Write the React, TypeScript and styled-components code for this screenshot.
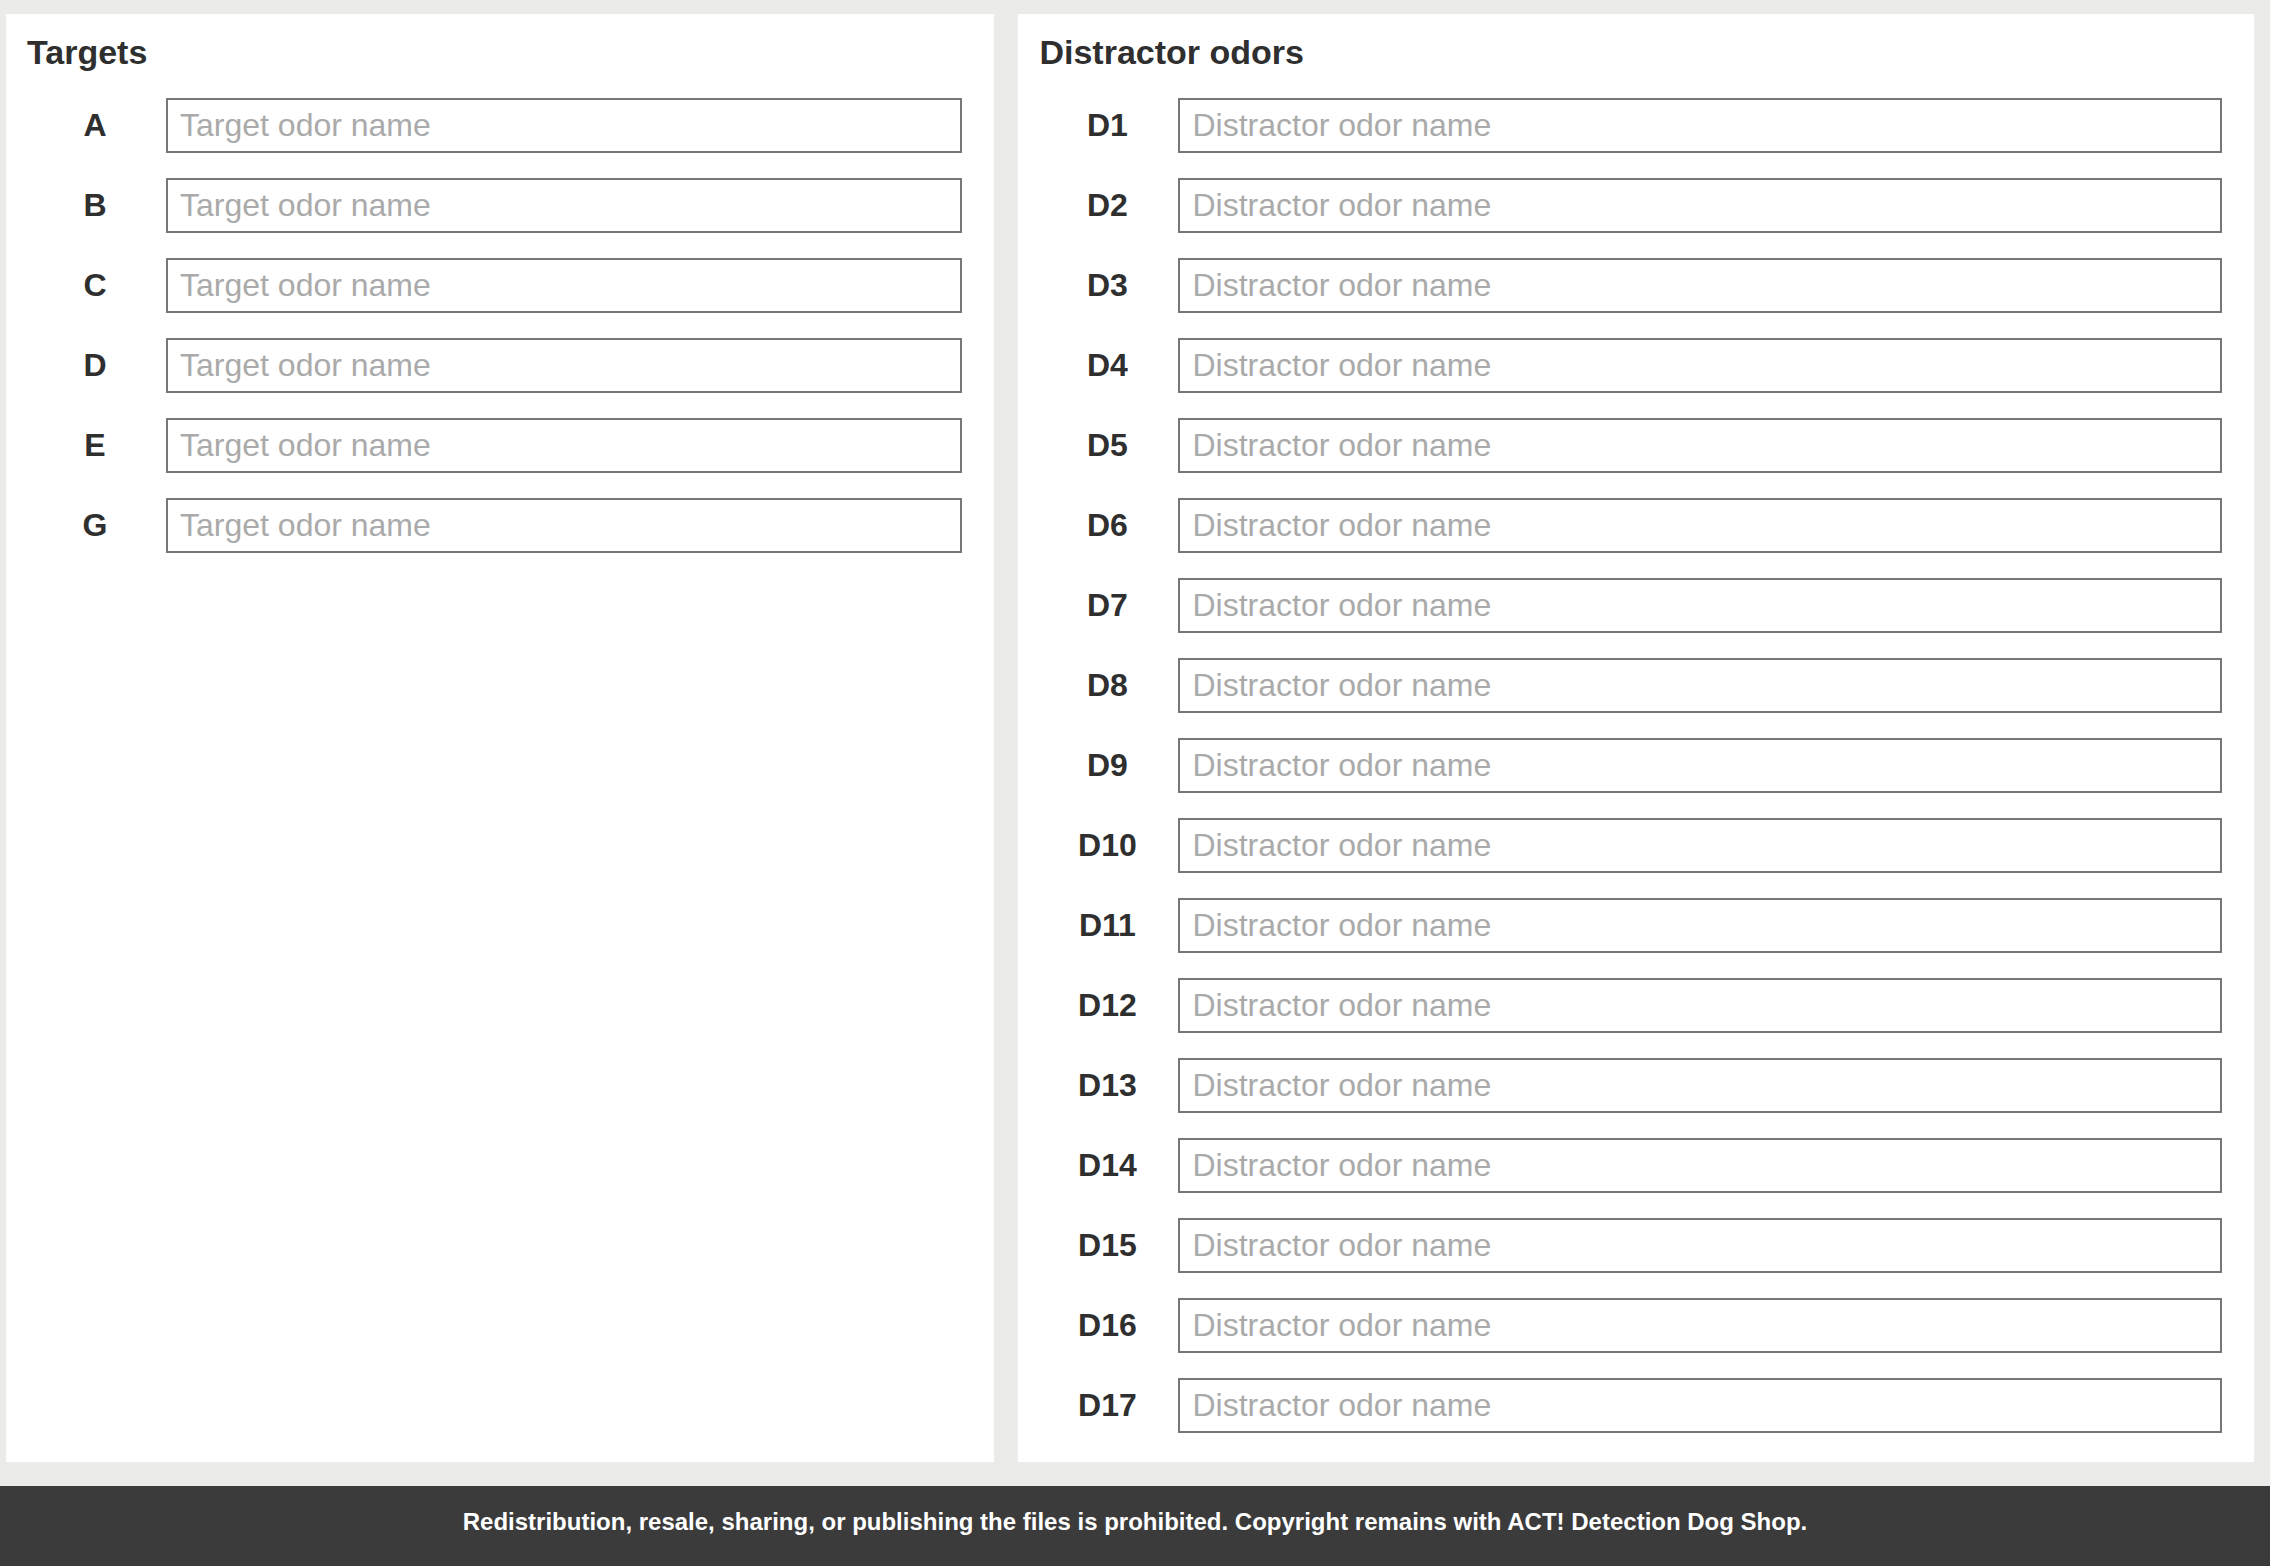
import styled, { createGlobalStyle } from "styled-components";

const GlobalStyle = createGlobalStyle`
  html, body {
    margin: 0;
    padding: 0;
    background: #ebebe9;
    font-family: "Liberation Sans", Arial, sans-serif;
  }
`;

const Page = styled.div`
  min-height: 100vh;
  display: flex;
  flex-direction: column;
`;

const Columns = styled.main`
  flex: 1;
  display: grid;
  grid-template-columns: 4fr 5fr;
  column-gap: 24px;
  padding: 14px 16px 24px 6px;
`;

const Panel = styled.section`
  background: #fff;
  padding: 19px 32px 29px 21px;
`;

const Title = styled.h2`
  margin: 0 0 26px;
  font-size: 34px;
  font-weight: 700;
  line-height: normal;
  color: #2f2f2f;
`;

const Rows = styled.div`
  display: grid;
  grid-template-columns: 136px 1fr;
  column-gap: 3px;
  row-gap: 25px;
  align-items: center;
`;

const Label = styled.label`
  text-align: center;
  font-size: 32px;
  font-weight: 700;
  color: #2f2f2f;
`;

const Input = styled.input`
  box-sizing: border-box;
  width: 100%;
  height: 55px;
  border: 2px solid #777;
  border-radius: 0;
  padding: 0 12px;
  font-family: "Liberation Sans", Arial, sans-serif;
  font-size: 32px;
  color: #2f2f2f;
  background: #fff;
  outline: none;
  &::placeholder {
    color: #aaa;
  }
`;

const Footer = styled.footer`
  box-sizing: border-box;
  height: 80px;
  padding-bottom: 8px;
  background: #3b3b3b;
  color: #fff;
  display: flex;
  align-items: center;
  justify-content: center;
  font-size: 24px;
  font-weight: 700;
`;

const targets = ["A", "B", "C", "D", "E", "G"];
const distractors = Array.from({ length: 17 }, (_, i) => `D${i + 1}`);

function App() {
  return (
    <Page>
      <GlobalStyle />
      <Columns>
        <Panel>
          <Title>Targets</Title>
          <Rows>
            {targets.map((t) => [
              <Label key={`l-${t}`}>{t}</Label>,
              <Input key={`i-${t}`} placeholder="Target odor name" />,
            ])}
          </Rows>
        </Panel>
        <Panel>
          <Title>Distractor odors</Title>
          <Rows>
            {distractors.map((d) => [
              <Label key={`l-${d}`}>{d}</Label>,
              <Input key={`i-${d}`} placeholder="Distractor odor name" />,
            ])}
          </Rows>
        </Panel>
      </Columns>
      <Footer>
        Redistribution, resale, sharing, or publishing the files is prohibited. Copyright remains with ACT! Detection Dog Shop.
      </Footer>
    </Page>
  );
}

export default App;
